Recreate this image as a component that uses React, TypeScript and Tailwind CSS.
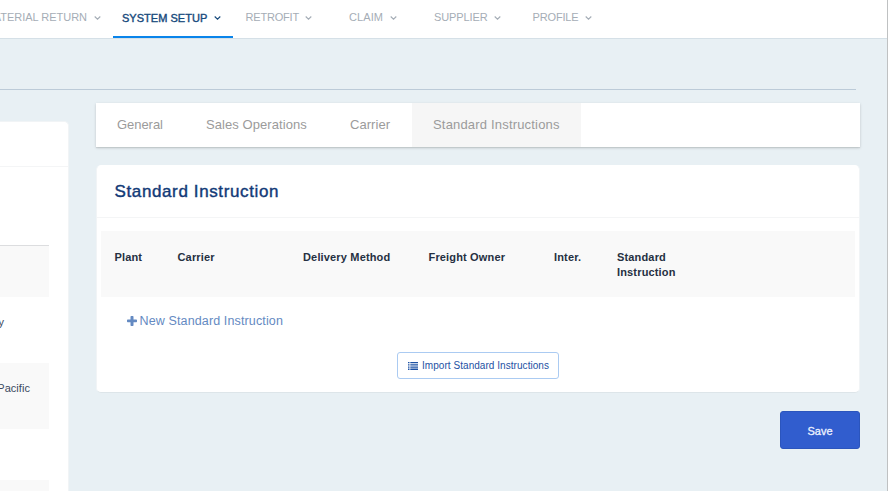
import React from "react";

type NavItem = { label: string; active?: boolean; box: string; spacing: string };

const navItems: NavItem[] = [
  { label: "MATERIAL RETURN", box: "w-[113px] justify-end pr-[12.5px]", spacing: "tracking-[-0.02px]" },
  { label: "SYSTEM SETUP", active: true, box: "w-[120px] pl-[9px]", spacing: "tracking-[0.03px]" },
  { label: "RETROFIT", box: "w-[116px] pl-[12.5px]", spacing: "tracking-[-0.2px]" },
  { label: "CLAIM", box: "w-[85px]", spacing: "tracking-[0.1px]" },
  { label: "SUPPLIER", box: "w-[98px]", spacing: "tracking-[-0.1px]" },
  { label: "PROFILE", box: "w-[80px] pl-[0.5px]", spacing: "tracking-[-0.15px]" },
];

const tabs = [
  { label: "General", width: "w-[89px]", spacing: "tracking-[-0.05px]" },
  { label: "Sales Operations", width: "w-[144px]", spacing: "tracking-[0.07px]" },
  { label: "Carrier", width: "w-[83px]", spacing: "tracking-[0.05px]" },
  { label: "Standard Instructions", width: "w-[169px]", spacing: "tracking-[0.18px]", active: true },
];

const columns = [
  { label: "Plant", width: "w-[63px]" },
  { label: "Carrier", width: "w-[125.5px]" },
  { label: "Delivery Method", width: "w-[125.5px]" },
  { label: "Freight Owner", width: "w-[125.5px]" },
  { label: "Inter.", width: "w-[63px]" },
  { label: "Standard Instruction", width: "w-[90px]" },
];

function Chevron() {
  return (
    <svg className="ml-[6.5px] h-[6px] w-[7px] shrink-0" viewBox="0 0 7 6" fill="none" stroke="currentColor" strokeWidth="1.1">
      <path d="M0.7 1.5 3.5 4.2 6.3 1.5" />
    </svg>
  );
}

function PlusIcon() {
  return (
    <svg className="h-[10px] w-[10px]" viewBox="0 0 10 10" fill="currentColor">
      <path d="M4.2 0h1.6c.4 0 .7.3.7.7v2.8h2.8c.4 0 .7.3.7.7v1.4c0 .4-.3.7-.7.7H6.5v3c0 .4-.3.7-.7.7H4.2c-.4 0-.7-.3-.7-.7v-3H.7c-.4 0-.7-.3-.7-.7V4.2c0-.4.3-.7.7-.7h2.8V.7c0-.4.3-.7.7-.7z" />
    </svg>
  );
}

function ListIcon() {
  return (
    <svg className="h-[8px] w-[10px]" viewBox="0 0 10 8" fill="currentColor">
      <path d="M0 0h1.5v1.3H0zM0 2.2h1.5v1.3H0zM0 4.4h1.5v1.3H0zM0 6.6h1.5v1.3H0zM2.3 0H10v1.3H2.3zM2.3 2.2H10v1.3H2.3zM2.3 4.4H10v1.3H2.3zM2.3 6.6H10v1.3H2.3z" />
    </svg>
  );
}

export default function App() {
  return (
    <div className="flex h-[491px] w-[888px] flex-col overflow-hidden border-r border-[#bfc1c2] bg-[#e8f0f4] font-['Liberation_Sans',Arial,sans-serif]">
      <nav className="flex h-[39px] shrink-0 border-b border-[#d5e0e7] bg-white text-[11px] text-[#a5adb6]">
        {navItems.map((item) => (
          <div
            key={item.label}
            className={`flex h-[38px] shrink-0 items-center whitespace-nowrap ${item.box} ${item.spacing} ${
              item.active ? "border-b-2 border-[#0a84ea] text-[#174a7c] [-webkit-text-stroke:0.4px]" : "pb-[3px]"
            }`}
          >
            {item.label}
            <Chevron />
          </div>
        ))}
      </nav>

      <hr className="mt-[50px] mr-[31px] shrink-0 border-[#bccbd8]" />

      <div className="flex grow items-start">
        <aside className="mt-[31px] mr-[27px] h-[400px] w-[69px] shrink-0 rounded-tr-[5px] border-t border-r border-[#f1f4f6] bg-white text-[11px] text-[#3b4a5f]">
          <div className="h-[45px] border-b border-[#f4f5f6]" />
          <div className="mt-[78px] w-[49px]">
            <div className="h-[52px] border-t border-[#dcdddf] bg-[#f9f9f9]" />
            <div className="flex h-[66px] items-start justify-end pt-[18px] pr-[45px] leading-[15px]">Railway</div>
            <div className="flex h-[66px] items-start justify-end overflow-hidden bg-[#f9f9f9] pt-[18px] pr-[19px] leading-[15px] tracking-[0.05px] whitespace-nowrap">
              Canadian Pacific
            </div>
            <div className="h-[51px]" />
            <div className="h-[66px] bg-[#f9f9f9]" />
          </div>
        </aside>

        <main className="flex w-[764px] flex-col pt-[13px]">
          <div className="flex h-[44px] bg-white text-[13px] text-[#9b9b9b] shadow-[0_1px_3px_rgba(0,0,0,0.14),0_1px_1px_rgba(0,0,0,0.08)]">
            {tabs.map((tab) => (
              <div
                key={tab.label}
                className={`flex items-center pl-[21px] whitespace-nowrap ${tab.width} ${tab.spacing} ${tab.active ? "bg-[#f6f6f6]" : ""}`}
              >
                {tab.label}
              </div>
            ))}
          </div>

          <section className="mt-[18px] flex h-[228px] flex-col rounded-[5px] border border-t-0 border-[#f1f4f6] border-b-[#dde5e9] bg-white">
            <h2 className="flex h-[53px] items-center border-b border-[#f4f5f6] pt-[1px] pl-[17.5px] text-[17px] tracking-[0.62px] text-[#123a77] [-webkit-text-stroke:0.4px]">
              Standard Instruction
            </h2>
            <div className="mx-[4px] mt-[13px] flex h-[66px] bg-[#f9f9f9] pt-[19px] pl-[13.5px] text-[11px] leading-[15px] font-bold tracking-[0.16px] text-[#253042]">
              {columns.map((column) => (
                <div key={column.label} className={column.width}>
                  {column.label}
                </div>
              ))}
            </div>
            <div className="mt-[16px] ml-[29.5px] flex h-4 items-center gap-[3px] text-[12.5px] tracking-[0.13px] text-[#648ac2]">
              <PlusIcon />
              New Standard Instruction
            </div>
            <button className="mt-[23px] flex h-[27px] w-[162px] items-center gap-[4px] self-center rounded-[3px] border border-[#abcbf2] pl-[10px] text-[10px] tracking-[0.05px] whitespace-nowrap text-[#1d51a3]">
              <ListIcon />
              Import Standard Instructions
            </button>
          </section>

          <button className="mt-[18px] flex h-[38px] w-[80px] items-center justify-center self-end rounded-[3px] border border-[#2b55bd] bg-[#315dce] pt-[2px] text-[11px] text-[#edf2ff] [-webkit-text-stroke:0.3px]">
            Save
          </button>
        </main>
      </div>
    </div>
  );
}
